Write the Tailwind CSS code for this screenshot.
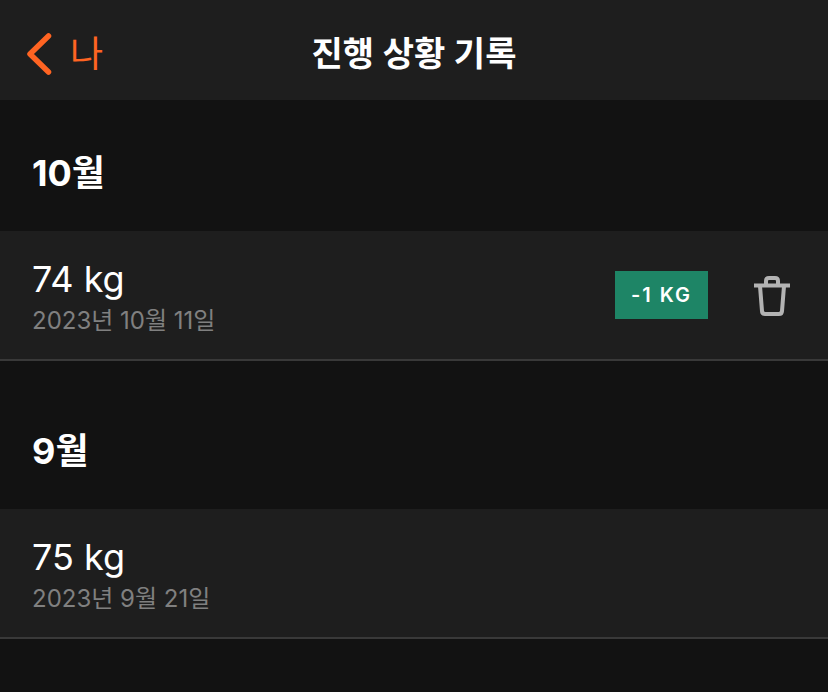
<!DOCTYPE html>
<html lang="ko">
<head>
    <meta charset="UTF-8">
    <meta name="viewport" content="width=device-width, initial-scale=1.0">
    <title>진행 상황 기록</title>
    <script src="https://cdn.jsdelivr.net/npm/@tailwindcss/browser@4"></script>
</head>
<body class="min-h-screen bg-[#121212] text-white font-[Inter,'Noto_Sans_CJK_KR',sans-serif]">

    <!-- Header -->
    <header class="grid h-[100px] grid-cols-[1fr_auto_1fr] items-center bg-[#1e1e1e] px-6 pt-2">
        <a href="#" class="flex items-center gap-4 text-4xl text-[#ff6422]">
            <svg class="h-11 w-7" viewBox="0 0 28 44" fill="none" stroke="currentColor" stroke-width="5.500" stroke-linecap="round" stroke-linejoin="round" aria-hidden="true">
                <path d="M24.500 4 L6 22 L24.500 40"/>
            </svg>
            <span class="pl-0.5">나</span>
        </a>
        <h1 class="text-[34px] leading-10 font-semibold">진행 상황 기록</h1>
    </header>

    <main>
        <section>
            <h2 class="px-8 pt-[53px] pb-[38px] text-4xl leading-10 font-bold">10월</h2>
            <div class="flex items-center border-b-2 border-[#393939] bg-[#1e1e1e] py-[22px] pr-9 pl-8">
                <div class="flex-1">
                    <p class="text-4xl leading-[52px]">74 kg</p>
                    <p class="text-2xl leading-8 text-[#808080]">2023년 10월 11일</p>
                </div>
                <span class="bg-[#1e8566] px-4 text-xl leading-12 font-semibold tracking-[2px]">-1 KG</span>
                <button type="button" aria-label="삭제" class="ml-11 text-[#b3b3b3]">
                    <svg class="h-11 w-10" viewBox="0 0 40 44" fill="none" stroke="currentColor" stroke-width="4" stroke-linejoin="round" aria-hidden="true">
                        <path d="M2 12.500H38"/>
                        <path d="M14 12V8Q14 5 17 5H23Q26 5 26 8V12"/>
                        <path d="M8 13L10 38Q10.200 41 13 41H27Q29.800 41 30 38L32 13"/>
                    </svg>
                </button>
            </div>
        </section>

        <section>
            <h2 class="px-8 pt-[70px] pb-[38px] text-4xl leading-10 font-bold">9월</h2>
            <div class="flex items-center border-b-2 border-[#393939] bg-[#1e1e1e] py-[22px] pr-9 pl-8">
                <div class="flex-1">
                    <p class="text-4xl leading-[52px]">75 kg</p>
                    <p class="text-2xl leading-8 text-[#808080]">2023년 9월 21일</p>
                </div>
            </div>
        </section>
    </main>

</body>
</html>
